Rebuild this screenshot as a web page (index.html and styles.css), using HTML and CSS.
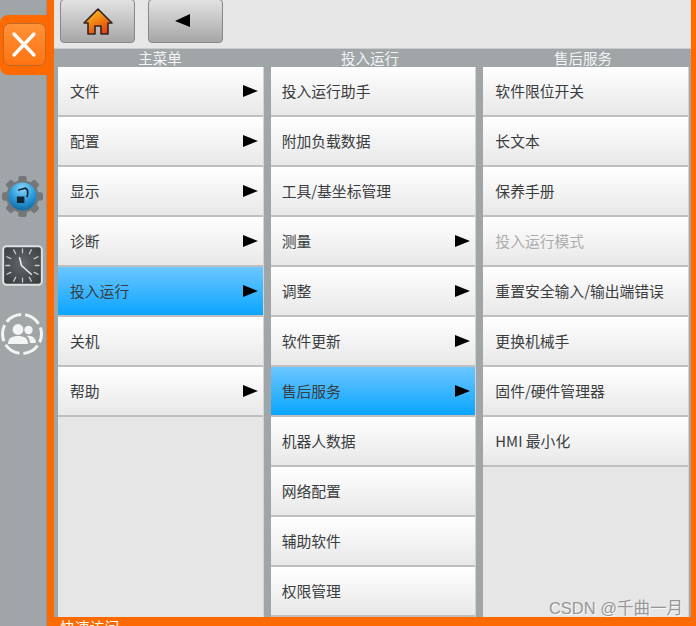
FILE: index.html
```
<!DOCTYPE html>
<html lang="zh">
<head>
<meta charset="utf-8">
<title>主菜单</title>
<link rel="stylesheet" href="styles.css">
</head>
<body>
<div class="app">
  <aside class="rail">
    <div class="close-tab">
      <button class="close-btn" aria-label="关闭">
        <svg viewBox="0 0 42 42" width="42" height="42"><path d="M10 10 L30 31 M30 10 L10 31" stroke="#fff" stroke-width="3.4" stroke-linecap="round" fill="none"/></svg>
      </button>
    </div>
    <div class="rail-icons">
      <svg class="gear" viewBox="0 0 44 44" width="41" height="41">
        <defs>
          <radialGradient id="gb" cx="50%" cy="22%" r="80%"><stop offset="0" stop-color="#8ad6f7"/><stop offset="0.55" stop-color="#2a9bdc"/><stop offset="1" stop-color="#11699f"/></radialGradient>
        </defs>
        <g fill="#74777a">
          <circle cx="22" cy="22" r="17.5"/>
          <rect x="17.5" y="0" width="9" height="44" rx="2.5"/>
          <rect x="17.5" y="0" width="9" height="44" rx="2.5" transform="rotate(45 22 22)"/>
          <rect x="17.5" y="0" width="9" height="44" rx="2.5" transform="rotate(90 22 22)"/>
          <rect x="17.5" y="0" width="9" height="44" rx="2.5" transform="rotate(135 22 22)"/>
        </g>
        <circle cx="22" cy="22" r="15" fill="url(#gb)"/>
        <path d="M16 22 L24 22 L24 29 L16 29 Z" fill="#122531"/>
        <path d="M18 15 L25 13 C28 14 28 18 27 22" stroke="#122531" stroke-width="1.8" fill="none" stroke-linecap="round"/>
      </svg>
      <svg class="clock" viewBox="0 0 42 42" width="41" height="41">
        <defs>
          <radialGradient id="cb" cx="50%" cy="45%" r="65%"><stop offset="0" stop-color="#63686b"/><stop offset="1" stop-color="#383c3f"/></radialGradient>
        </defs>
        <rect x="1.2" y="1.2" width="39.6" height="39.6" rx="3.5" fill="url(#cb)" stroke="#dfe2e3" stroke-width="2"/>
        <g stroke="#c9cdce" stroke-width="1.3" stroke-linecap="round">
          <path d="M21 4v4M21 34v4M4 21h4M34 21h4M12 5l2 4M30 5l-2 4M5 12l4 2M37 12l-4 2M5 30l4-2M37 30l-4-2M12 37l2-4M30 37l-2-4"/>
        </g>
        <path d="M18 13 L20 21 L30 30" stroke="#e8eaeb" stroke-width="1.6" fill="none" stroke-linecap="round"/>
      </svg>
      <svg class="users" viewBox="0 0 44 44" width="44" height="44">
        <circle cx="22" cy="22" r="19.5" fill="none" stroke="#f3f4f4" stroke-width="3" stroke-dasharray="16.5 4" stroke-dashoffset="8"/>
        <circle cx="28.5" cy="18" r="4.2" fill="#f3f4f4"/>
        <path d="M27 24 C32 23 36 26 36 31 L30 31 C30 28 29 26 27 24 Z" fill="#f3f4f4"/>
        <circle cx="18" cy="17.5" r="5.4" fill="#f3f4f4"/>
        <path d="M8 32 C8 26 12 24 18 24 C24 24 28 26 28 32 Z" fill="#f3f4f4"/>
      </svg>
    </div>
  </aside>
  <main class="main">
    <div class="toolbar">
      <button class="tool home" aria-label="主页">
        <svg viewBox="0 0 32 30" width="32" height="30">
          <defs><linearGradient id="hg" x1="0.2" y1="0" x2="0.8" y2="1"><stop offset="0" stop-color="#f8c81c"/><stop offset="1" stop-color="#e8350d"/></linearGradient></defs>
          <path d="M16 2 L30 16 L26 16 L26 27 L19 27 L19 19 L13 19 L13 27 L6 27 L6 16 L2 16 Z" fill="url(#hg)" stroke="#33241c" stroke-width="1.6" stroke-linejoin="round"/>
        </svg>
      </button>
      <button class="tool back" aria-label="返回">
        <svg viewBox="0 0 16 14" width="16" height="14"><path d="M0 7 L15 0 L15 13 Z" fill="#000"/></svg>
      </button>
    </div>
    <div class="heads">
      <span>主菜单</span><span>投入运行</span><span>售后服务</span>
    </div>
    <div class="columns">
      <ul class="col">
        <li class="item sub">文件</li>
        <li class="item sub">配置</li>
        <li class="item sub">显示</li>
        <li class="item sub">诊断</li>
        <li class="item sub active">投入运行</li>
        <li class="item">关机</li>
        <li class="item sub">帮助</li>
      </ul>
      <ul class="col">
        <li class="item">投入运行助手</li>
        <li class="item">附加负载数据</li>
        <li class="item">工具/基坐标管理</li>
        <li class="item sub">测量</li>
        <li class="item sub">调整</li>
        <li class="item sub">软件更新</li>
        <li class="item sub active">售后服务</li>
        <li class="item">机器人数据</li>
        <li class="item">网络配置</li>
        <li class="item">辅助软件</li>
        <li class="item">权限管理</li>
      </ul>
      <ul class="col">
        <li class="item">软件限位开关</li>
        <li class="item">长文本</li>
        <li class="item">保养手册</li>
        <li class="item off">投入运行模式</li>
        <li class="item">重置安全输入/输出端错误</li>
        <li class="item">更换机械手</li>
        <li class="item">固件/硬件管理器</li>
        <li class="item">HMI 最小化</li>
      </ul>
    </div>
    <div class="footer">快速访问</div>
    <div class="mark">CSDN @千曲一月</div>
  </main>
</div>
</body>
</html>
```
FILE: styles.css
```
* { box-sizing: border-box; }
html, body { margin: 0; height: 100%; overflow: hidden; }
body { font-family: "Noto Sans CJK SC", "Liberation Sans", sans-serif; background: #ff6a00; }
.app { display: flex; width: 696px; height: 626px; }

.rail { width: 47px; flex: none; background: #a0a5a8; border-right: 1px solid #8f9497; }
.close-tab {
  margin-top: 15px; width: 47px; height: 60px; background: #ff6a00;
  border-radius: 8px 0 0 8px;
  padding: 8px 0 0 3px; margin-right: -1px;
}
.close-btn {
  display: block; width: 43px; height: 43px; padding: 0;
  border: 1px solid #bd6a2c; border-radius: 7px;
  background: linear-gradient(#ff9238, #ff7411);
}
.close-btn svg { display: block; }
.rail-icons { display: flex; flex-direction: column; align-items: center; padding: 101px 2px 0 0; }
.gear { display: block; }
.clock { display: block; margin-top: 28px; }
.users { display: block; margin-top: 26px; }

.main {
  position: relative; flex: none; width: 649px; height: 626px;
  background: #ff6a00; padding: 0 5px 0 7px;
  display: flex; flex-direction: column; overflow: hidden;
}
.toolbar {
  height: 49px; flex: none; background: #e6e6e6; display: flex; gap: 13px;
  padding-left: 6px; border-bottom: 1px solid #c9cbcc;
}
.tool {
  width: 75px; height: 44px; padding: 0; margin-top: -1px;
  display: flex; align-items: center; justify-content: center;
  border: 1px solid #85898b; border-radius: 4px;
  background: linear-gradient(#e2e2e2, #a6a6a6);
}
.home svg { margin-top: 1px; }
.back svg { margin-right: 5px; }

.heads {
  height: 18px; flex: none; background: #a0a5a8; display: grid;
  grid-template-columns: 206px 214px 212px; padding-left: 3px;
  color: #f2f4f5; font-size: 14.5px; line-height: 18px; text-align: center;
}

.columns {
  height: 550px; flex: none; display: flex; background: #a0a5a8; gap: 7px;
  padding: 0 2px 0 4px;
}
.col {
  list-style: none; margin: 0; padding: 0; width: 206px; height: 550px;
  background: #e6e6e6; border-right: 1px solid #d4d4d4;
}
.item {
  position: relative; height: 50px; padding-left: 12px; line-height: 48px;
  font-size: 14.8px; color: #3a3d40; white-space: nowrap;
  background: linear-gradient(#ffffff, #e8e8e8);
  border-bottom: 2px solid #bfbfbf;
}
.col:nth-child(2) .item { padding-left: 11px; }
.sub::after {
  content: ""; position: absolute; right: 5px; top: 18px;
  border-left: 15px solid #000; border-top: 6.5px solid transparent; border-bottom: 6.5px solid transparent;
}
.active { background: linear-gradient(#6cc6ff, #0aa5ff); }
.off { color: #adadad; }

.footer {
  height: 9px; flex: none; padding-left: 6px; overflow: hidden;
  color: #fff; font-size: 14.8px; line-height: 20px;
}
.mark {
  position: absolute; right: 13px; bottom: 8px;
  color: #969696; font-size: 16.5px; line-height: 20px;
  font-family: "Liberation Sans", "Noto Sans CJK SC", sans-serif;
  text-shadow: 1px 1px 0 #f8f8f8;
}
```
